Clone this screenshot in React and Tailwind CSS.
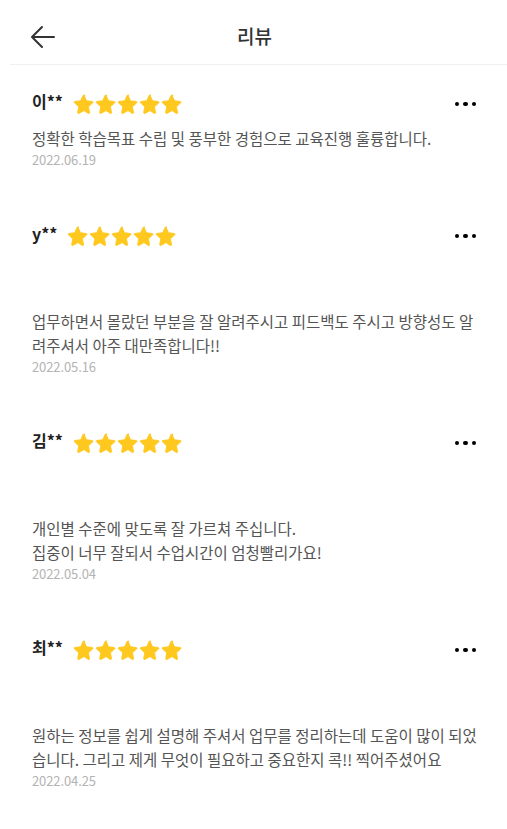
import React from "react";

const reviews = [
  { name: "이**", text: ["정확한 학습목표 수립 및 풍부한 경험으로 교육진행 훌륭합니다."], date: "2022.06.19", gap: false },
  { name: "y**", text: ["업무하면서 몰랐던 부분을 잘 알려주시고 피드백도 주시고 방향성도 알", "려주셔서 아주 대만족합니다!!"], date: "2022.05.16", gap: true },
  { name: "김**", text: ["개인별 수준에 맞도록 잘 가르쳐 주십니다.", "집중이 너무 잘되서 수업시간이 엄청빨리가요!"], date: "2022.05.04", gap: true },
  { name: "최**", text: ["원하는 정보를 쉽게 설명해 주셔서 업무를 정리하는데 도움이 많이 되었", "습니다. 그리고 제게 무엇이 필요하고 중요한지 콕!! 찍어주셨어요"], date: "2022.04.25", gap: true },
];

function Star() {
  return (
    <svg width="22" height="22" viewBox="0 0 24 24">
      <path
        d="M12 2.6l2.75 5.9 6.35.8c.7.1 1 1 .45 1.45l-4.7 4.35 1.2 6.3c.15.75-.65 1.3-1.3.95L12 19.2l-5.6 3.1c-.65.35-1.45-.2-1.3-.95l1.2-6.3-4.7-4.35c-.55-.45-.25-1.350.45-1.45l6.35-.8L11.1 2.6c.35-.7 1.5-.7 1.9 0z"
        fill="#FFC81E"
        stroke="#FFC81E"
        strokeWidth="1"
        strokeLinejoin="round"
      />
    </svg>
  );
}

function Dots() {
  return (
    <div className="flex items-center gap-[4px]">
      <span className="w-[4.5px] h-[4.5px] rounded-full bg-black" />
      <span className="w-[4.5px] h-[4.5px] rounded-full bg-black" />
      <span className="w-[4.5px] h-[4.5px] rounded-full bg-black" />
    </div>
  );
}

export default function App() {
  return (
    <div
      className="w-[507px] min-h-[829px] bg-white"
      style={{ fontFamily: '"Noto Sans CJK KR", "Noto Sans", sans-serif' }}
    >
      <div className="relative h-[65px] flex items-center justify-center border-b border-[#f0f0f0] ml-[10px]">
        <button className="absolute left-[20px] top-[24px] w-[26px] h-[26px] flex items-center justify-center">
          <svg width="26" height="26" viewBox="0 0 26 26" fill="none" stroke="#333" strokeWidth="2" strokeLinecap="round" strokeLinejoin="round">
            <path d="M24 13H3" />
            <path d="M12 3L2 13l10 10" />
          </svg>
        </button>
        <h1 className="text-[19px] font-medium text-[#333] mt-[8px] mr-[8px]">리뷰</h1>
      </div>
      <div>
        {reviews.map((r, i) => (
          <div key={i} className="pl-[32px] pr-[31px] pt-[25px] pb-[27px]">
            <div className="h-[24px] flex items-center justify-between">
              <div className="flex items-center">
                <span className="text-[16px] font-bold text-[#222] leading-[24px] -mt-[3px]">{r.name}</span>
                <div className="flex items-center ml-[10px] mt-[3px]">
                  {[0, 1, 2, 3, 4].map((s) => (
                    <Star key={s} />
                  ))}
                </div>
              </div>
              <div className="mt-[4px]">
                <Dots />
              </div>
            </div>
            {r.gap && <div className="h-[51px]" />}
            <div className="mt-[12px] text-[15.5px] leading-[24px] text-[#555] whitespace-nowrap">
              {r.text.map((t, j) => (
                <div key={j}>{t}</div>
              ))}
            </div>
            <div className="text-[13px] leading-[20px] text-[#b3b3b3] tracking-[-0.1px]">{r.date}</div>
          </div>
        ))}
      </div>
    </div>
  );
}
